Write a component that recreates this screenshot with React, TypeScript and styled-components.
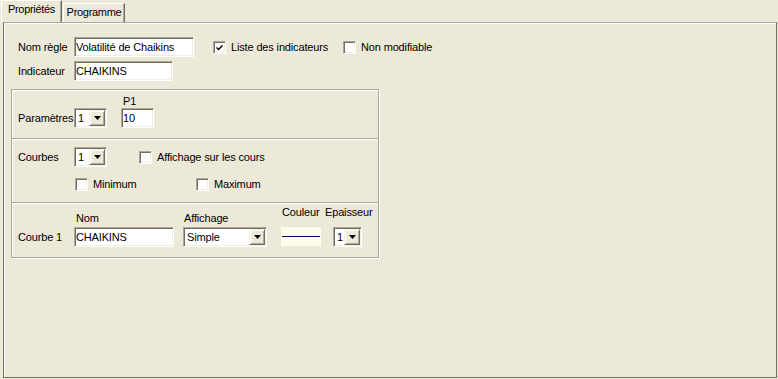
import React from 'react';
import styled, { createGlobalStyle } from 'styled-components';

const colors = {
    face: '#ECE9D8',
    shadow: '#ACA899',
    darkShadow: '#716F64',
    light: '#F1EFE2',
    white: '#FFFFFF',
};

const GlobalStyle = createGlobalStyle`
    html, body {
        margin: 0;
        padding: 0;
        background: ${colors.face};
    }
    body {
        font-family: "Liberation Sans", Arial, sans-serif;
        font-size: 11px;
        letter-spacing: -0.15px;
        color: #000;
    }
`;

const Window = styled.div`
    width: 778px;
    height: 379px;
    display: flex;
    flex-direction: column;
    background: ${colors.face};
    overflow: hidden;
`;

const TabStrip = styled.div`
    height: 22px;
    flex-shrink: 0;
    display: flex;
    align-items: flex-start;
    padding-left: 1px;
`;

const Tab = styled.div<{ $active?: boolean; $width: number }>`
    box-sizing: border-box;
    width: ${p => p.$width}px;
    height: ${p => (p.$active ? 22 : 19)}px;
    margin-top: ${p => (p.$active ? 0 : 3)}px;
    margin-left: ${p => (p.$active ? 0 : 1)}px;
    border-left: 1px solid ${colors.white};
    border-top: 1px solid ${colors.white};
    border-right: 1px solid ${colors.darkShadow};
    box-shadow: inset -1px 0 0 ${colors.shadow};
    padding-top: 2px;
    line-height: 13px;
    text-align: center;
    white-space: nowrap;
    letter-spacing: -0.3px;
`;

const Panel = styled.div`
    flex: 1;
    margin: 0 1px 1px 3px;
    border: 1px solid ${colors.darkShadow};
    border-top-color: ${colors.shadow};
    box-shadow: inset 1px 1px 0 ${colors.white};
    padding: 14px 0 0 7px;
    display: flex;
    flex-direction: column;
    align-items: flex-start;
`;

const TopForm = styled.div`
    display: flex;
    flex-direction: column;
    gap: 4px;
    padding-left: 7px;
`;

const Row = styled.div`
    display: flex;
    align-items: center;
    height: 20px;
`;

const RowLabel = styled.div`
    width: 56px;
    flex-shrink: 0;
    line-height: 20px;
    white-space: nowrap;
`;

const TextInput = styled.input<{ $width: number }>`
    box-sizing: border-box;
    width: ${p => p.$width}px;
    height: 20px;
    margin: 0;
    padding: 0 1px;
    font: inherit;
    letter-spacing: inherit;
    color: #000;
    background: ${colors.white};
    border: 1px solid;
    border-color: ${colors.shadow} ${colors.white} ${colors.white} ${colors.shadow};
    box-shadow: inset 1px 1px 0 ${colors.darkShadow}, inset -1px -1px 0 ${colors.light};
    outline: none;
`;

const SelectBox = styled.div<{ $width: number }>`
    box-sizing: border-box;
    width: ${p => p.$width}px;
    height: 20px;
    display: flex;
    align-items: stretch;
    background: ${colors.white};
    border: 1px solid;
    border-color: ${colors.shadow} ${colors.white} ${colors.white} ${colors.shadow};
    box-shadow: inset 1px 1px 0 ${colors.darkShadow}, inset -1px -1px 0 ${colors.light};
    padding: 1px;
`;

const SelectValue = styled.div`
    flex: 1;
    padding-left: 2px;
    line-height: 16px;
    white-space: nowrap;
    overflow: hidden;
`;

const DropButton = styled.div`
    box-sizing: border-box;
    width: 16px;
    flex-shrink: 0;
    display: flex;
    align-items: center;
    justify-content: center;
    background: ${colors.face};
    border: 1px solid;
    border-color: ${colors.light} ${colors.darkShadow} ${colors.darkShadow} ${colors.light};
    box-shadow: inset 1px 1px 0 ${colors.white}, inset -1px -1px 0 ${colors.shadow};
`;

const CheckItem = styled.div<{ $width?: number; $offset?: number }>`
    display: flex;
    align-items: center;
    gap: 5px;
    width: ${p => (p.$width ? `${p.$width}px` : 'auto')};
    margin-left: ${p => p.$offset ?? 0}px;
    white-space: nowrap;
`;

const CheckBox = styled.div`
    box-sizing: border-box;
    width: 13px;
    height: 13px;
    flex-shrink: 0;
    display: flex;
    align-items: center;
    justify-content: center;
    background: ${colors.white};
    border: 1px solid;
    border-color: ${colors.shadow} ${colors.white} ${colors.white} ${colors.shadow};
    box-shadow: inset 1px 1px 0 ${colors.darkShadow}, inset -1px -1px 0 ${colors.light};
`;

const GroupBox = styled.div`
    box-sizing: border-box;
    width: 368px;
    margin-top: 8px;
    border: 1px solid ${colors.shadow};
    box-shadow: inset 1px 1px 0 ${colors.white}, 1px 1px 0 ${colors.white};
    display: flex;
    flex-direction: column;
`;

const Section = styled.div<{ $pad: string; $divided?: boolean }>`
    padding: ${p => p.$pad};
    display: flex;
    flex-direction: column;
    gap: 7px;
    ${p => p.$divided && `
        border-top: 1px solid ${colors.shadow};
        box-shadow: inset 0 1px 0 ${colors.white};
    `}
`;

const FieldRow = styled.div`
    display: flex;
    align-items: flex-end;
`;

const Field = styled.div<{ $offset?: number }>`
    display: flex;
    flex-direction: column;
    margin-left: ${p => p.$offset ?? 0}px;
`;

const Caption = styled.div<{ $indent?: number; $gap?: number }>`
    line-height: 13px;
    height: 13px;
    padding-left: ${p => p.$indent ?? 0}px;
    margin-bottom: ${p => p.$gap ?? 0}px;
    white-space: nowrap;
`;

const Swatch = styled.div`
    box-sizing: border-box;
    width: 40px;
    height: 19px;
    margin-bottom: 1px;
    display: flex;
    align-items: center;
    padding: 0 1px;
    background: #FCFCEA;
`;

const SwatchLine = styled.div<{ $color: string }>`
    flex: 1;
    height: 1px;
    background: ${p => p.$color};
`;

const Spacer = styled.div<{ $width: number }>`
    width: ${p => p.$width}px;
    flex-shrink: 0;
`;

const Arrow = () => (
    <svg width="7" height="4" viewBox="0 0 7 4">
        <polygon points="0,0 7,0 3.5,4" fill="#000" />
    </svg>
);

const Check = ({ checked }: { checked?: boolean }) => (
    <CheckBox>
        {checked && (
            <svg width="9" height="9" viewBox="0 0 9 9">
                <path d="M1.5 3.5 L3.5 5.5 L7.5 1.5 L7.5 3.5 L3.5 7.5 L1.5 5.5 Z" fill="#000" />
            </svg>
        )}
    </CheckBox>
);

const Select = ({ value, width }: { value: string; width: number }) => (
    <SelectBox $width={width}>
        <SelectValue>{value}</SelectValue>
        <DropButton>
            <Arrow />
        </DropButton>
    </SelectBox>
);

const App = () => (
    <Window>
        <GlobalStyle />
        <TabStrip>
            <Tab $active $width={61}>Propriétés</Tab>
            <Tab $width={62}>Programme</Tab>
        </TabStrip>
        <Panel>
            <TopForm>
                <Row>
                    <RowLabel>Nom règle</RowLabel>
                    <TextInput $width={120} value="Volatilité de Chaikins" readOnly />
                    <CheckItem $offset={19} $width={130}>
                        <Check checked />
                        Liste des indicateurs
                    </CheckItem>
                    <CheckItem>
                        <Check />
                        Non modifiable
                    </CheckItem>
                </Row>
                <Row>
                    <RowLabel>Indicateur</RowLabel>
                    <TextInput $width={99} value="CHAIKINS" readOnly />
                </Row>
            </TopForm>

            <GroupBox>
                <Section $pad="5px 6px 10px">
                    <FieldRow>
                        <RowLabel>Paramètres</RowLabel>
                        <Select value="1" width={33} />
                        <Field $offset={14}>
                            <Caption $indent={2}>P1</Caption>
                            <TextInput $width={33} value="10" readOnly />
                        </Field>
                    </FieldRow>
                </Section>

                <Section $pad="8px 6px 8px" $divided>
                    <Row>
                        <RowLabel>Courbes</RowLabel>
                        <Select value="1" width={33} />
                        <CheckItem $offset={32}>
                            <Check />
                            Affichage sur les cours
                        </CheckItem>
                    </Row>
                    <Row>
                        <Spacer $width={57} />
                        <CheckItem $width={121}>
                            <Check />
                            Minimum
                        </CheckItem>
                        <CheckItem>
                            <Check />
                            Maximum
                        </CheckItem>
                    </Row>
                </Section>

                <Section $pad="3px 6px 10px" $divided>
                    <FieldRow>
                        <RowLabel>Courbe 1</RowLabel>
                        <Field>
                            <Caption $indent={2} $gap={2}>Nom</Caption>
                            <TextInput $width={100} value="CHAIKINS" readOnly />
                        </Field>
                        <Field $offset={9}>
                            <Caption $indent={1} $gap={2}>Affichage</Caption>
                            <Select value="Simple" width={84} />
                        </Field>
                        <Field $offset={14}>
                            <Caption $indent={1} $gap={8}>Couleur</Caption>
                            <Swatch>
                                <SwatchLine $color="#0A0A5C" />
                            </Swatch>
                        </Field>
                        <Field $offset={4}>
                            <Caption $gap={8}>Epaisseur</Caption>
                            <FieldRow>
                                <Spacer $width={8} />
                                <Select value="1" width={29} />
                            </FieldRow>
                        </Field>
                    </FieldRow>
                </Section>
            </GroupBox>
        </Panel>
    </Window>
);

export default App;
